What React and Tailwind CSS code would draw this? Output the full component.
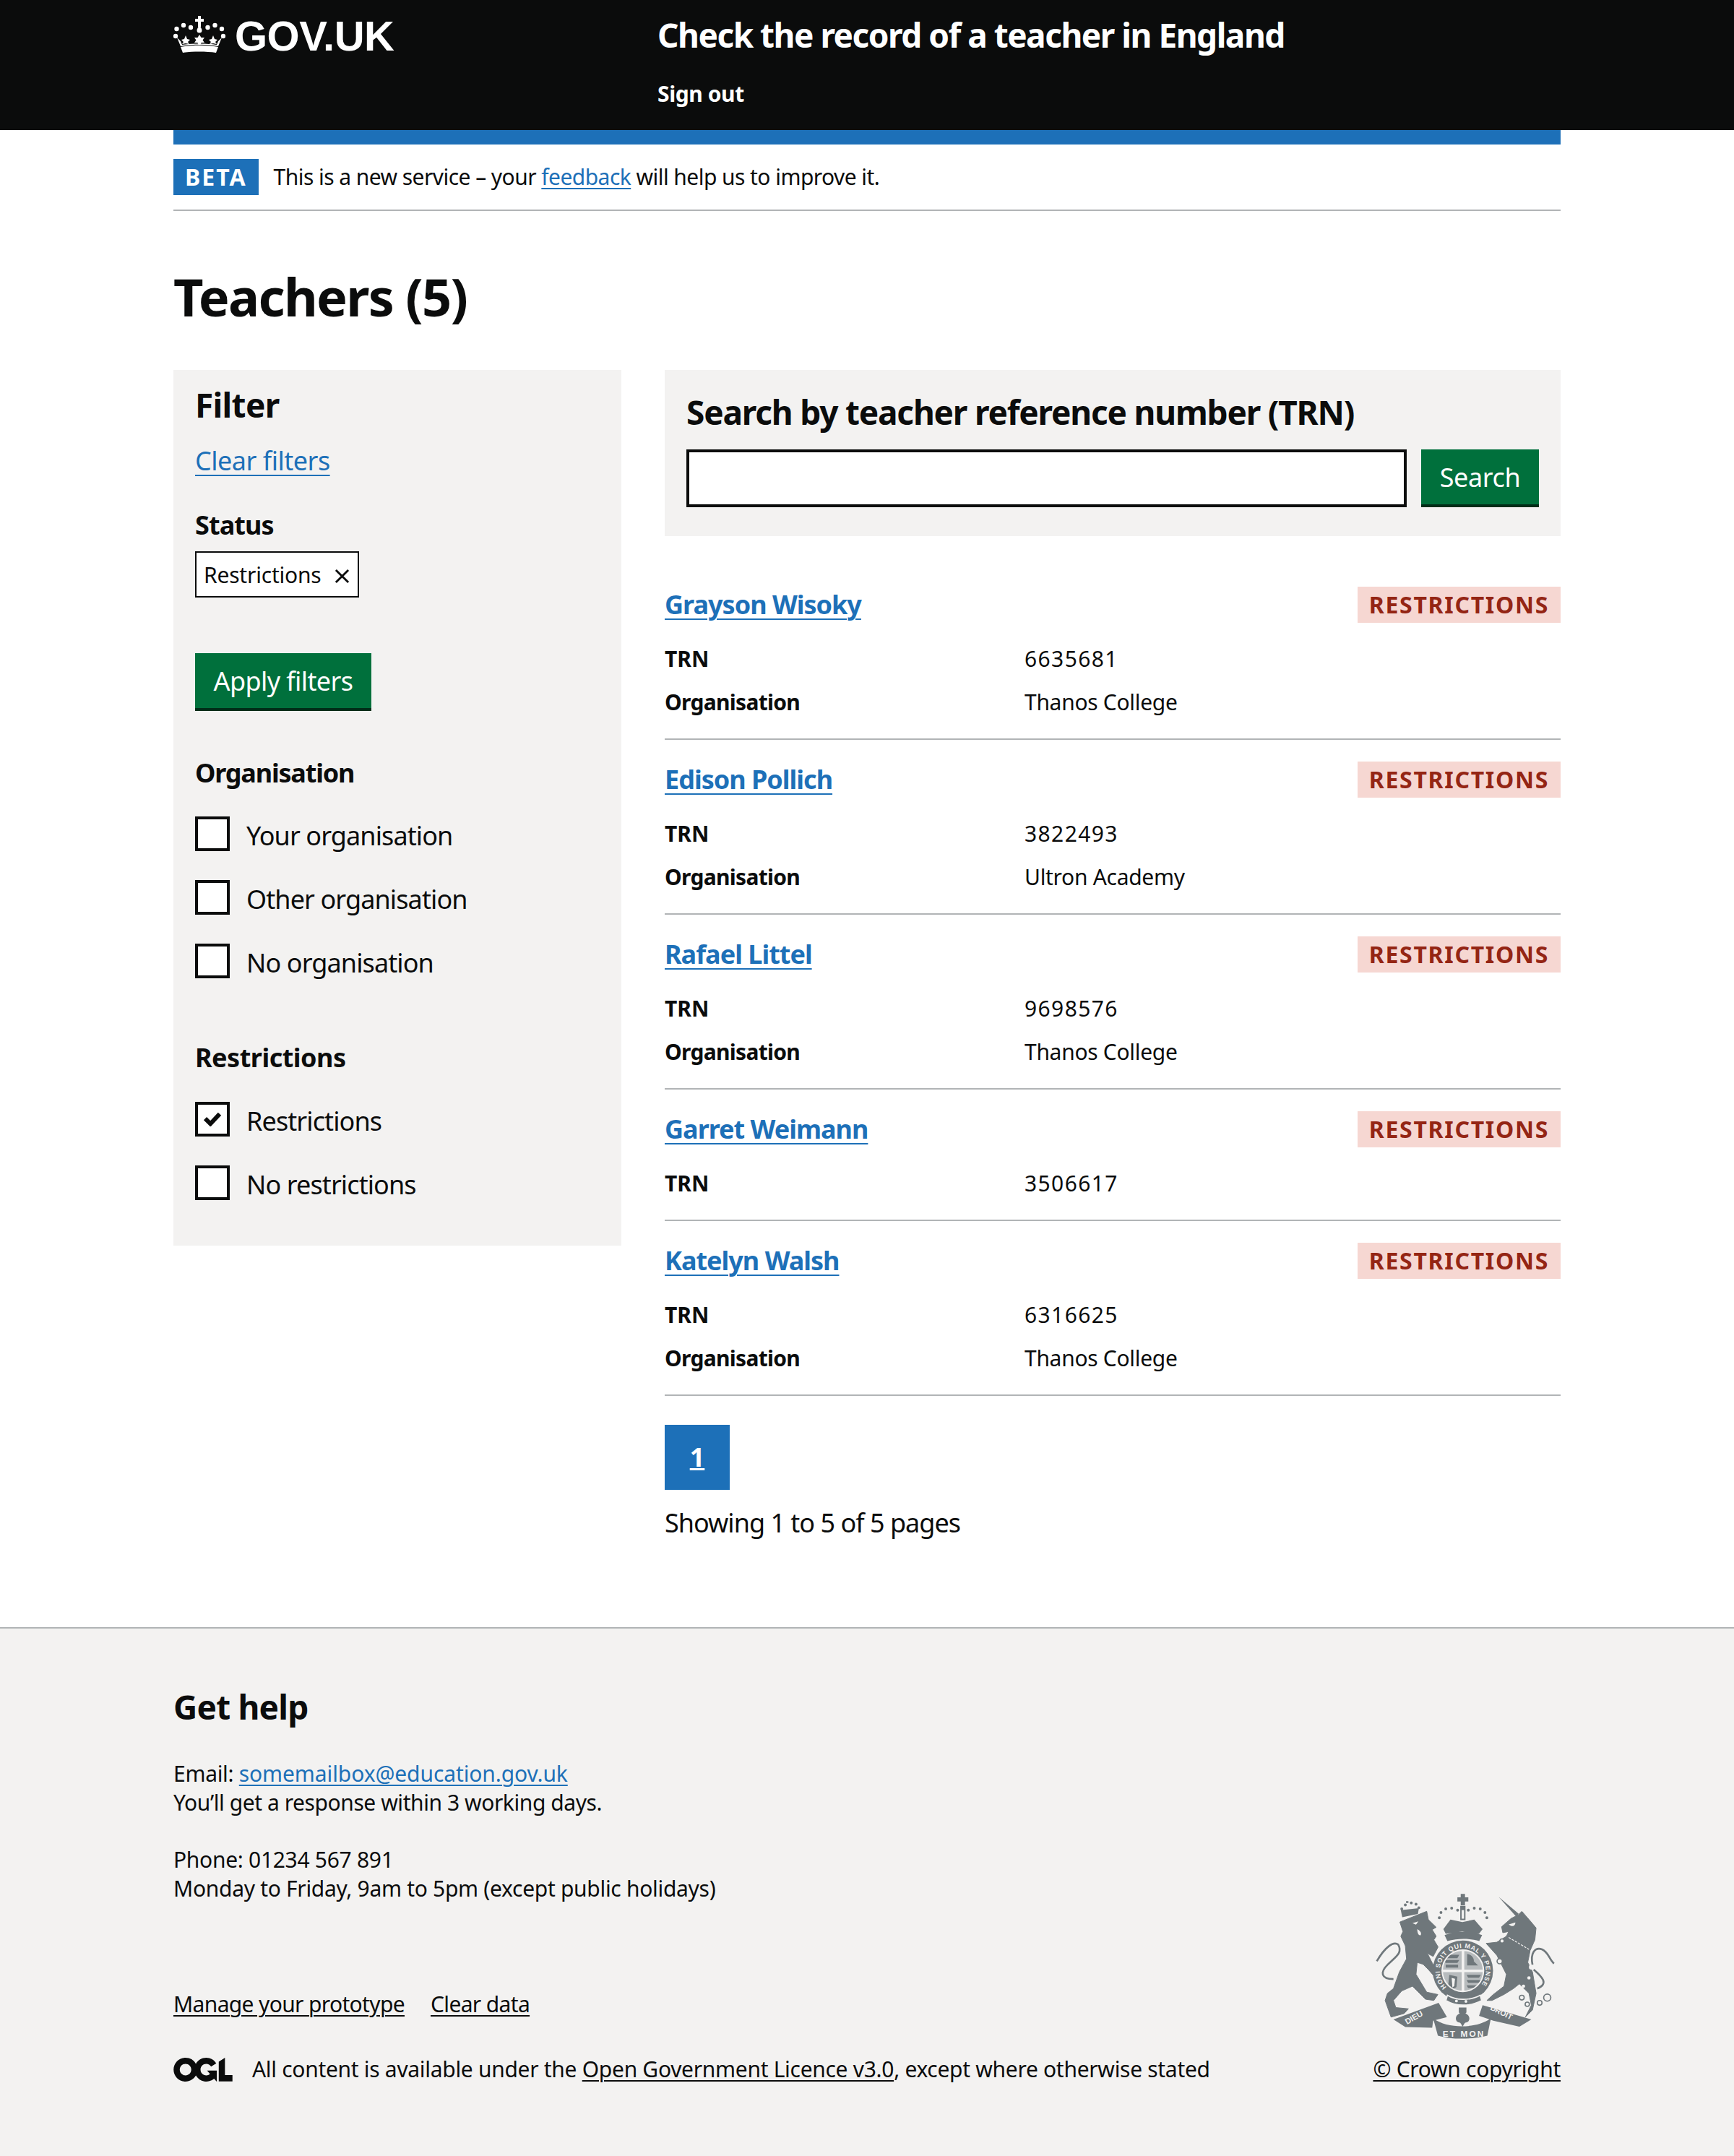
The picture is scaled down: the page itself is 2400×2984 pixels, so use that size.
const rows = [
  { name: "Grayson Wisoky", trn: "6635681", org: "Thanos College" },
  { name: "Edison Pollich", trn: "3822493", org: "Ultron Academy" },
  { name: "Rafael Littel", trn: "9698576", org: "Thanos College" },
  { name: "Garret Weimann", trn: "3506617" },
  { name: "Katelyn Walsh", trn: "6316625", org: "Thanos College" },
];

function Crown() {
  const dots = [[4.5, 18], [14, 13], [24, 16], [47.5, 16], [57.5, 13], [67, 18], [3, 28], [69, 28]];
  return (
    <svg viewBox="0 0 72 51" className="w-[72px] h-[51px] mt-[22px] shrink-0" fill="#fff">
      {dots.map(([x, y]) => (
        <circle key={x + "-" + y} cx={x} cy={y} r="3.2" />
      ))}
      <path d="M34 0h4v4h4v4h-4v7h-4V8h-4V4h4z" />
      <path d="M36 13c2 3 3.5 5 3.5 7a3.5 3.5 0 0 1-7 0c0-2 1.5-4 3.5-7z" />
      <path d="M36 26l2.5 4h4.5l-2.5 3.5 2.5 3.5h-4.5l-1 3h-3l-1-3h-4.5l2.5-3.5-2.5-3.5h4.5z" />
      <path d="M17 27l2 5 4 1-3 3 2 3-5-1-5 1 2-3-3-3 4-1z" />
      <path d="M55 27l2 5 4 1-3 3 2 3-5-1-5 1 2-3-3-3 4-1z" />
      <path d="M5 30l5 12c16-3 36-3 52 0l5-12-5 5-2 5c-12-2-36-2-48 0l-2-5z" />
      <path d="M10 43c16-3 36-3 52 0l-3 8c-13-2-33-2-46 0z" />
    </svg>
  );
}

function Crest() {
  const c = "#6f777b";
  const bg = "#f3f2f1";
  const big = [[398, 222], [405, 200], [425, 185], [450, 182], [475, 190], [520, 190], [545, 182], [570, 185], [590, 200], [598, 222]];
  const small = [[240, 185], [255, 168], [280, 160], [300, 165], [312, 180]];
  const chain = [[745, 558, 10], [768, 586, 9], [820, 580, 10], [852, 558, 15], [662, 320, 9], [652, 405, 11]];
  return (
    <svg viewBox="128 118 758 620" className="w-[250px] h-[204px] mr-[7px]">
      {/* lion */}
      <path fill={c} stroke={c} strokeWidth="3" strokeLinejoin="round" d="M232 240L345 195L352 230L385 262L368 272L385 300L375 315L393 345L372 385L348 372L372 420L400 470L385 478L352 440L330 418L305 410L300 460L345 535L392 545L375 570L340 565L285 510L240 530L205 570L215 600L268 605L250 625L195 640L170 570L180 540L205 520L230 450L260 395L255 340L236 300L245 280Z" />
      <path fill="none" stroke={c} strokeWidth="8" d="M205 480C150 480 150 450 180 420C215 385 245 370 225 335C205 320 170 345 135 405" />
      <path fill={bg} d="M285 245l25-8-10 14zM305 270c10 5 20 15 15 25-8 3-14-5-15-25z" />
      {small.map(([x, y]) => (
        <circle key={x} cx={x} cy={y} r="6" fill={c} />
      ))}
      <path fill={c} d="M236 190l76-8-4 24-66 14zM258 152h10v8h-10z" />
      {/* unicorn */}
      <path fill={c} stroke={c} strokeWidth="3" strokeLinejoin="round" d="M660 260L700 225L730 210L745 195L780 235L805 265L800 315L780 360L770 410L790 450L805 540L790 610L760 640L785 590L775 540L735 500L710 520L670 545L620 570L598 570L625 545L670 510L680 460L660 420L640 380L595 330L640 325L680 300L690 280L665 285Z" />
      <path fill={c} d="M648 135L732 205L722 218Z" />
      <path fill="none" stroke={c} strokeWidth="8" d="M790 420C780 370 800 345 830 355C860 370 855 390 880 415M795 440C830 470 860 500 810 520" />
      <path fill="none" stroke={bg} strokeWidth="4" strokeDasharray="10 5" d="M690 305L775 355" />
      <path fill={bg} d="M690 250l28-8c0 14-12 22-28 8z" />
      {chain.map(([x, y, r]) => (
        <circle key={x} cx={x} cy={y} r={r} fill={bg} stroke={c} strokeWidth="5" />
      ))}
      <circle cx="785" cy="430" r="10" fill={bg} />
      <circle cx="775" cy="475" r="7" fill={bg} />
      <circle cx="752" cy="510" r="7" fill={bg} />
      {/* crown */}
      {big.map(([x, y]) => (
        <circle key={x} cx={x} cy={y} r="6" fill={c} />
      ))}
      <path fill={c} d="M488 122h18v14h14v18h-14v16h-18v-16h-14v-18h14zM486 172h22v60h-22zM415 270l30-40 50 10 50-10 35 40-15 20-70-10-70 10zM420 295c50-18 110-18 158 0l-12 25c-40-12-90-12-134 0z" />
      <path fill={bg} d="M492 190h10v36h-10z" />
      {/* garter and shield */}
      <circle cx="497" cy="445" r="127" fill={c} />
      <circle cx="497" cy="445" r="90" fill={bg} />
      <clipPath id="shield">
        <circle cx="497" cy="445" r="84" />
      </clipPath>
      <g clipPath="url(#shield)" fill={c}>
        <path d="M410 362h82v78h-82zM503 362h82v78h-82zM410 451h82v90h-82zM503 451h82v90h-82z" fill="#b7bbbd" />
        <path d="M420 378h62l-8 14h-50zM420 400h62l-8 12h-50zM425 420h52v12h-52zM515 375c20 2 30 18 28 30l18 18h-46zM513 462h60l-8 12h-46zM513 484h60l-8 12h-46zM513 506h52l-8 12h-38zM440 462l34 8-4 44-22 12-12-24z" />
        <path fill={bg} d="M450 475l14 4-3 30-8 6z" />
      </g>
      <defs>
        <path id="garter" d="M428 514A97 97 0 1 1 566 514" />
        <path id="dieu" d="M262 672L372 608" />
        <path id="droit" d="M610 608L740 672" />
      </defs>
      <text fill={bg} fontFamily="Liberation Sans, sans-serif" fontWeight="700" fontSize="27">
        <textPath href="#garter" textLength="440">HONI SOIT QUI MAL Y PENSE</textPath>
      </text>
      <path fill={c} stroke={bg} strokeWidth="5" d="M432 548c35 22 95 24 138 0l6 22c-45 26-110 26-150 0z" />
      <circle cx="470" cy="572" r="6" fill={bg} />
      <circle cx="510" cy="574" r="6" fill={bg} />
      {/* motto */}
      <path fill={c} d="M205 650L395 580L430 640L372 655L368 685L255 682Z" />
      <path fill={c} d="M580 590L785 650L735 680L625 655L565 635Z" />
      <path fill={c} d="M372 645C430 690 555 690 615 645L600 718C530 735 450 735 392 718Z" />
      <path fill={c} d="M480 600h32v20l-4 5c16 5 22 25 10 35-6 4-12 2-15 8l-7 12-7-12c-3-6-9-4-15-8-12-10-6-30 10-35l-4-5z" />
      <text fill={bg} fontFamily="Liberation Sans, sans-serif" fontWeight="700" fontSize="36" x="412" y="722" textLength="172">ET MON</text>
      <text fill={bg} fontFamily="Liberation Sans, sans-serif" fontWeight="700" fontSize="34">
        <textPath href="#dieu">DIEU</textPath>
      </text>
      <text fill={bg} fontFamily="Liberation Sans, sans-serif" fontWeight="700" fontSize="32">
        <textPath href="#droit">DROIT</textPath>
      </text>
    </svg>
  );
}

function Checkbox({ label, checked, className = "" }) {
  return (
    <div className={"flex items-center h-[48px] " + className}>
      <span className="w-[48px] h-[48px] border-4 border-[#0b0c0c] bg-white flex items-center justify-center shrink-0">
        {checked && (
          <svg viewBox="0 0 28 22" className="w-[26px] h-[20px]">
            <path d="M3 10l8 8L25 3" fill="none" stroke="#0b0c0c" strokeWidth="6.5" />
          </svg>
        )}
      </span>
      <span className="ml-[23px] text-[36px] leading-[50px] mt-[6px] tracking-[-0.9px] text-[#0b0c0c]">{label}</span>
    </div>
  );
}

function Row({ row }) {
  return (
    <div className="pt-[30px] pb-[30px] border-b-2 border-[#b1b4b6]">
      <div className="flex items-center justify-between h-[50px]">
        <a href="#" className="text-[36px] leading-[50px] font-bold text-[#1d70b8] underline decoration-[2px] underline-offset-[6px] tracking-[-1px]">
          {row.name}
        </a>
        <span className="h-[50px] px-[16px] bg-[#f6d7d2] text-[#942514] text-[32px] leading-[50px] font-bold uppercase tracking-[1.7px]">
          Restrictions
        </span>
      </div>
      <div className="mt-[30px] flex text-[30px] leading-[40px]">
        <div className="w-[498px] font-bold">TRN</div>
        <div className="tracking-[1.4px]">{row.trn}</div>
      </div>
      {row.org && (
        <div className="mt-[20px] flex text-[30px] leading-[40px]">
          <div className="w-[498px] font-bold tracking-[-0.7px]">Organisation</div>
          <div className="tracking-[-0.3px]">{row.org}</div>
        </div>
      )}
    </div>
  );
}

export default function App() {
  return (
    <div className="font-['Noto_Sans',sans-serif] text-[#0b0c0c] bg-white min-h-[2984px]">
      {/* header */}
      <header className="bg-[#0b0c0c] h-[180px] text-white">
        <div className="w-[1920px] mx-auto flex">
          <div className="w-[670px] flex">
            <Crown />
            <span className="ml-[13px] mt-[14px] text-[58px] leading-[72px] font-bold font-['Liberation_Sans',sans-serif] tracking-[-0.5px]">
              GOV.UK
            </span>
          </div>
          <div>
            <div className="mt-[18px] text-[46px] leading-[60px] font-bold tracking-[-1.5px]">
              Check the record of a teacher in England
            </div>
            <a href="#" className="block mt-[32px] text-[30px] leading-[40px] font-bold tracking-[-0.4px]">
              Sign out
            </a>
          </div>
        </div>
      </header>

      <div className="w-[1920px] mx-auto">
        <div className="h-[20px] bg-[#1d70b8]" />
        <div className="flex items-center pt-[20px] pb-[20px] border-b-2 border-[#b1b4b6]">
          <span className="h-[50px] px-[16px] bg-[#1d70b8] text-white text-[32px] leading-[50px] font-bold tracking-[2px]">
            BETA
          </span>
          <span className="ml-[21px] text-[30px] leading-[40px] tracking-[-0.55px]">
            This is a new service – your{" "}
            <a href="#" className="text-[#1d70b8] underline decoration-[2px] underline-offset-[4px]">feedback</a>{" "}
            will help us to improve it.
          </span>
        </div>

        <h1 className="mt-[78px] mb-[62px] text-[72px] leading-[80px] font-bold tracking-[-1.7px]">Teachers (5)</h1>

        <div className="flex gap-[60px] h-[1740px]">
          {/* filter panel */}
          <aside className="w-[620px] h-[1212px] bg-[#f3f2f1] px-[30px] pt-[18px]">
            <h2 className="text-[46px] leading-[60px] font-bold tracking-[-0.7px]">Filter</h2>
            <a href="#" className="block mt-[23px] text-[36px] leading-[50px] tracking-[-0.5px] text-[#1d70b8] underline decoration-[2px] underline-offset-[6px]">
              Clear filters
            </a>
            <h3 className="mt-[39px] text-[36px] leading-[50px] font-bold tracking-[-0.9px]">Status</h3>
            <div className="mt-[11px] h-[64px] w-[227px] border-2 border-[#0b0c0c] bg-white flex items-center justify-between pl-[10px] pr-[11px] text-[30px] tracking-[-0.2px]">
              Restrictions
              <svg viewBox="0 0 22 22" className="w-[21px] h-[21px] mt-[4px]">
                <path d="M2 2l18 18M20 2L2 20" stroke="#0b0c0c" strokeWidth="3" />
              </svg>
            </div>
            <button className="block mt-[77px] w-[244px] h-[76px] mb-[4px] pt-[2px] bg-[#00703c] text-white text-[36px] tracking-[-0.6px] shadow-[0_4px_0_#002d18]">
              Apply filters
            </button>

            <h3 className="mt-[65px] text-[36px] leading-[50px] font-bold tracking-[-1.2px]">Organisation</h3>
            <Checkbox className="mt-[35px]" label="Your organisation" />
            <Checkbox className="mt-[40px]" label="Other organisation" />
            <Checkbox className="mt-[40px]" label="No organisation" />

            <h3 className="mt-[85px] text-[36px] leading-[50px] font-bold tracking-[-0.5px]">Restrictions</h3>
            <Checkbox className="mt-[36px]" label="Restrictions" checked />
            <Checkbox className="mt-[40px]" label="No restrictions" />
          </aside>

          {/* results */}
          <main className="w-[1240px]">
            <div className="h-[230px] bg-[#f3f2f1] px-[30px] pt-[28px]">
              <h2 className="text-[46px] leading-[60px] font-bold tracking-[-1.2px]">
                Search by teacher reference number (TRN)
              </h2>
              <div className="mt-[22px] flex gap-[20px]">
                <input className="w-[997px] h-[80px] border-4 border-[#0b0c0c] bg-white" />
                <button className="w-[163px] h-[76px] pt-[2px] bg-[#00703c] text-white text-[36px] tracking-[-0.4px] shadow-[0_4px_0_#002d18]">
                  Search
                </button>
              </div>
            </div>
            <div className="mt-[40px]">
              {rows.map((row) => (
                <Row key={row.trn} row={row} />
              ))}
            </div>
            <a href="#" className="mt-[40px] w-[90px] h-[90px] bg-[#1d70b8] text-white text-[36px] font-bold underline flex items-center justify-center">
              1
            </a>
            <p className="mt-[21px] text-[36px] leading-[50px] tracking-[-1px]">Showing 1 to 5 of 5 pages</p>
          </main>
        </div>
      </div>

      {/* footer */}
      <footer className="bg-[#f3f2f1] border-t-2 border-[#b1b4b6] h-[732px] pt-[78px] text-[30px] leading-[40px] tracking-[-0.3px]">
        <div className="w-[1920px] mx-auto">
          <h2 className="text-[46px] leading-[60px] font-bold tracking-[-0.8px]">Get help</h2>
          <p className="mt-[43px]">
            Email: <a href="#" className="tracking-[-0.1px] text-[#1d70b8] underline decoration-[2px] underline-offset-[4px]">somemailbox@education.gov.uk</a>
          </p>
          <p className="tracking-[-0.43px]">You’ll get a response within 3 working days.</p>
          <p className="mt-[39px]">Phone: 01234 567 891</p>
          <p>Monday to Friday, 9am to 5pm (except public holidays)</p>
          <div className="flex justify-between items-end -mt-[14px]">
            <div>
              <div className="flex gap-[36px] tracking-[-0.65px]">
                <a href="#" className="underline decoration-[2px] underline-offset-[4px]">Manage your prototype</a>
                <a href="#" className="underline decoration-[2px] underline-offset-[4px]">Clear data</a>
              </div>
              <div className="mt-[50px] flex items-center">
                <svg viewBox="0 0 483.2 195.7" className="w-[82px] h-[33px] mr-[27px]" fill="#0b0c0c">
                  <path d="M421.5 142.8V.1l-50.7 32.3v161.1h112.4v-50.7zm-122.3-9.6A47.12 47.12 0 0 1 221 97.8c0-26 21.1-47.1 47.1-47.1 16.7 0 31.4 8.7 39.7 21.8l42.7-27.2A97.63 97.63 0 0 0 268.1 0c-36.5 0-68.3 20.1-85.1 49.7A98 98 0 0 0 97.8 0C43.9 0 0 43.9 0 97.8s43.9 97.8 97.8 97.8c36.5 0 68.3-20.1 85.1-49.7a97.76 97.76 0 0 0 149.6 25.4l19.4 22.2h3v-87.8h-80l24.3 27.5zM97.8 145c-26 0-47.1-21.1-47.1-47.1s21.1-47.1 47.1-47.1 47.2 21 47.2 47S123.8 145 97.8 145" />
                </svg>
                <span>
                  All content is available under the{" "}
                  <a href="#" className="underline decoration-[2px] underline-offset-[4px]">Open Government Licence v3.0</a>, except where otherwise stated
                </span>
              </div>
            </div>
            <div className="flex flex-col items-end">
              <Crest />
              <a href="#" className="mt-[20px] underline decoration-[2px] underline-offset-[4px]">© Crown copyright</a>
            </div>
          </div>
        </div>
      </footer>
    </div>
  );
}
